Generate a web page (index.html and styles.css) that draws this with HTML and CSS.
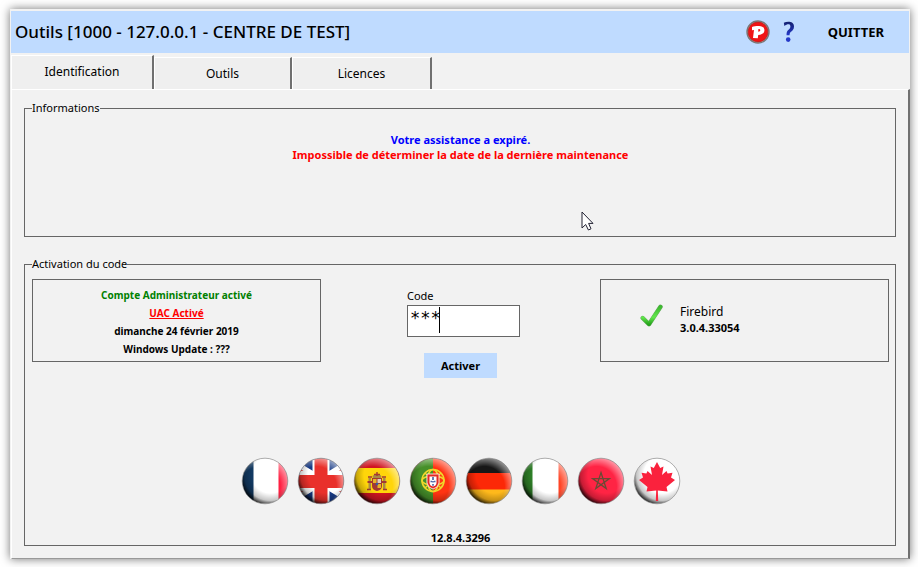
FILE: index.html
```html
<!DOCTYPE html>
<html lang="fr">
<head>
<meta charset="utf-8">
<title>Outils</title>
<link rel="stylesheet" href="styles.css">
</head>
<body>
<svg width="0" height="0" class="defs" aria-hidden="true">
  <defs>
    <clipPath id="disc"><circle cx="24" cy="24" r="22.6"/></clipPath>
    <radialGradient id="shade" cx="0.62" cy="0.36" r="0.68">
      <stop offset="0.6" stop-color="#000" stop-opacity="0"/>
      <stop offset="0.84" stop-color="#000" stop-opacity="0.22"/>
      <stop offset="1" stop-color="#000" stop-opacity="0.85"/>
    </radialGradient>
    <radialGradient id="gloss" cx="0.4" cy="0.62" r="0.68">
      <stop offset="0.65" stop-color="#fff" stop-opacity="0"/>
      <stop offset="1" stop-color="#fff" stop-opacity="0.6"/>
    </radialGradient>
    <g id="finish">
      <circle cx="24" cy="24" r="22.6" fill="url(#gloss)"/>
      <circle cx="24" cy="24" r="22.6" fill="url(#shade)"/>
      <circle cx="24" cy="24" r="22.8" fill="none" stroke="#777" stroke-opacity="0.65" stroke-width="0.9"/>
    </g>
    <linearGradient id="green" x1="0" y1="0" x2="0" y2="1">
      <stop offset="0" stop-color="#3cb82f"/><stop offset="0.6" stop-color="#62e84c"/><stop offset="1" stop-color="#27a31d"/>
    </linearGradient>
    <linearGradient id="blue" x1="0" y1="0" x2="0" y2="1">
      <stop offset="0" stop-color="#14206e"/><stop offset="1" stop-color="#2438c8"/>
    </linearGradient>
  </defs>
</svg>
<main class="window">
  <header class="titlebar">
    <h1>Outils [1000 - 127.0.0.1 - CENTRE DE TEST]</h1>
    <button class="tool" type="button" aria-label="P">
      <svg width="24" height="24" viewBox="0 0 24 24">
        <circle cx="12" cy="12" r="11" fill="#d8c8c6" stroke="#777" stroke-width="1.4"/>
        <circle cx="12" cy="12" r="9.9" fill="#f01414" stroke="#b51a1a" stroke-width="0.8"/>
        <path fill="#fff" fill-rule="evenodd" d="M6 7 C8 6 11 5.800 13 5.900 C16.800 6 18.600 7.800 18.400 10.400 C18.200 13.400 15.800 14.900 12.200 14.900 L11.800 18.200 L7 18 L8 10 L6 10.300 Z M12.400 9 L12.200 11.700 C13.600 11.700 14.300 11.200 14.300 10.300 C14.300 9.400 13.600 9 12.400 9 Z"/>
      </svg>
    </button>
    <button class="tool help" type="button" aria-label="Aide">
      <svg width="14" height="22" viewBox="0 0 14 22">
        <path fill="url(#blue)" d="M1.8 1.8 C5.8 -0.3 12 0.4 12 5.4 C12 8.3 10.4 9.6 9 10.8 C7.7 12 7.6 12.8 7.6 14.2 H4.6 C4.4 11.7 5 10.4 6.3 9.1 C7.5 7.8 8.4 7 8.4 5.4 C8.4 2.6 5.2 2.8 2.4 5 Z"/>
        <circle cx="6.2" cy="18.6" r="2.3" fill="#2438c8"/>
      </svg>
    </button>
    <button class="quit" type="button">QUITTER</button>
  </header>
  <nav class="tabs" role="tablist">
    <button class="tab active" type="button" role="tab" aria-selected="true">Identification</button>
    <button class="tab" type="button" role="tab" aria-selected="false">Outils</button>
    <button class="tab" type="button" role="tab" aria-selected="false">Licences</button>
  </nav>
  <section class="panel">
    <fieldset class="infos">
      <legend>Informations</legend>
      <p class="notice">Votre assistance a expiré.</p>
      <p class="alert">Impossible de déterminer la date de la dernière maintenance</p>
      <svg class="pointer" width="14" height="21" viewBox="0 0 14 21"><path d="M1 1 V17 L4.7 13.5 L7.4 19 L10 17.8 L7.6 12.4 H12 Z" fill="#fff" stroke="#223" stroke-width="1"/></svg>
    </fieldset>
    <fieldset class="activation">
      <legend>Activation du code</legend>
      <div class="columns">
        <div class="card status">
          <p class="ok">Compte Administrateur activé</p>
          <p><a class="uac" href="#">UAC Activé</a></p>
          <p>dimanche 24 février 2019</p>
          <p>Windows Update : ???</p>
        </div>
        <form class="code">
          <div class="entry">
            <label for="code">Code</label>
            <div class="field"><input id="code" type="text" value="***"><span class="caret"></span></div>
          </div>
          <button type="button">Activer</button>
        </form>
        <div class="card database">
          <svg width="24" height="24" viewBox="0 0 24 24"><path d="M2.7 14 L9 20.2 L20.5 2.8" fill="none" stroke="#6aa864" stroke-width="4.400" stroke-linecap="round" stroke-linejoin="round"/><path d="M2.7 14 L9 20.2 L20.5 2.8" fill="none" stroke="url(#green)" stroke-width="3.6" stroke-linecap="round" stroke-linejoin="round"/></svg>
          <div><p class="name">Firebird</p><p>3.0.4.33054</p></div>
        </div>
      </div>
      <div class="flags">
        <button type="button" aria-label="Français"><svg viewBox="0 0 48 48"><g clip-path="url(#disc)"><path fill="#fff" d="M0 0H48V48H0Z"/><path fill="#123a63" d="M0 0H12.500V48H0Z"/><path fill="#ff2142" d="M37.500 0H48V48H37.500Z"/></g><use href="#finish"/></svg></button>
        <button type="button" aria-label="English"><svg viewBox="0 0 48 48"><g clip-path="url(#disc)"><path fill="#173a85" d="M0 0H48V48H0Z"/><path stroke="#fff" stroke-width="9" d="M-6 6L54 42M54 6L-6 42"/><path stroke="#e5281f" stroke-width="2.600" d="M-6 8L24 26M54 8L24 26M24 22L-6 40M24 22L54 40"/><path fill="#fff" d="M15.500 0H32.500V48H15.500ZM0 14H48V34H0Z"/><path fill="#e9302b" d="M17.500 0H30.500V48H17.500ZM0 18H48V31H0Z"/></g><use href="#finish"/></svg></button>
        <button type="button" aria-label="Español"><svg viewBox="0 0 48 48"><g clip-path="url(#disc)"><path fill="#d01522" d="M0 0H48V48H0Z"/><path fill="#ffd50a" d="M0 11H48V36H0Z"/><path fill="#a98b45" d="M15.500 21H18V32H15.500ZM30 21H32.500V32H30ZM19.500 19Q24 14 28.500 19L28 21H20Z"/><path fill="#a33a32" d="M19 21H29V29Q29 33 24 34Q19 33 19 29ZM14.500 24H19V26H14.500ZM29 24H33.500V26H29Z"/><path fill="#e5b62a" d="M20 22H23.500V26H20ZM24.500 27H28V31H24.500Z"/><path fill="#ddd0be" d="M24.500 22H28V26H24.500Z"/><circle cx="24" cy="27" r="1.300" fill="#355ba1"/><path stroke="#a33a32" stroke-width="1.400" d="M21 17.500H27M24 15V19M15 20H19M29 20H33M14 32.500H18M30 32.500H34"/></g><use href="#finish"/></svg></button>
        <button type="button" aria-label="Português"><svg viewBox="0 0 48 48"><g clip-path="url(#disc)"><path fill="#ff3412" d="M0 0H48V48H0Z"/><path fill="#46902a" d="M0 0H24V48H0Z"/><g fill="none" stroke="#efd72b" stroke-width="1.600"><circle cx="24" cy="23.500" r="11"/><ellipse cx="24" cy="23.500" rx="11" ry="4.500"/><ellipse cx="24" cy="23.500" rx="5.500" ry="11"/><path d="M16 16L32 31M32 16L16 31"/></g><path fill="#e32a25" stroke="#fff" stroke-width=".8" d="M18 17H30V26Q29 31 24 32Q19 31 18 26Z"/><path fill="#fff" d="M20.500 19.500H27.500V26Q27 29 24 29.500Q21 29 20.500 26Z"/><path stroke="#4d64a8" stroke-width="1.700" d="M24 20V23M24 24V25.500M24 27V28.800M21.500 24.500H23M25 24.500H26.500"/></g><use href="#finish"/></svg></button>
        <button type="button" aria-label="Deutsch"><svg viewBox="0 0 48 48"><g clip-path="url(#disc)"><path fill="#171717" d="M0 0H48V17H0Z"/><path fill="#fc2807" d="M0 16H48V33H0Z"/><path fill="#ffb91b" d="M0 32.500H48V48H0Z"/></g><use href="#finish"/></svg></button>
        <button type="button" aria-label="Italiano"><svg viewBox="0 0 48 48"><g clip-path="url(#disc)"><path fill="#fff" d="M0 0H48V48H0Z"/><path fill="#2f8128" d="M0 0H11.500V48H0Z"/><path fill="#ff4526" d="M37.500 0H48V48H37.500Z"/></g><use href="#finish"/></svg></button>
        <button type="button" aria-label="Maroc"><svg viewBox="0 0 48 48"><g clip-path="url(#disc)"><path fill="#ff2444" d="M0 0H48V48H0Z"/><path fill="none" stroke="#6b4a35" stroke-width="1.300" d="M24 15.500L29.200 31.500L15.600 21.600H32.400L18.800 31.500Z"/></g><use href="#finish"/></svg></button>
        <button type="button" aria-label="Canada"><svg viewBox="0 0 48 48"><g clip-path="url(#disc)"><path fill="#fff" d="M0 0H48V48H0Z"/></g><use href="#finish"/><path fill="#fa223d" d="M24 5L27.200 11L30.500 9.500L29 18L33.500 14L34.600 16.600L39.500 15.800L38 20.600L42 23L33.500 30L34.500 34.500L24.800 33.500L25.200 44H22.800L23.200 33.500L13.500 34.500L14.500 30L6 23L10 20.600L8.500 15.800L13.400 16.600L14.500 14L19 18L17.500 9.500L20.800 11Z"/></svg></button>
      </div>
      <p class="version">12.8.4.3296</p>
    </fieldset>
  </section>
</main>
</body>
</html>
```
FILE: styles.css
```css
* { box-sizing: border-box; }
body {
  margin: 0;
  min-height: 100vh;
  padding: 9px 8px 8px 10px;
  display: flex;
  background: #fff;
  color: #000;
  font: 11px/16px "Noto Sans", sans-serif;
}
p, h1 { margin: 0; }
button { border: 0; padding: 0; background: none; color: inherit; font: inherit; }
.defs { position: absolute; }
.window {
  flex: 1;
  min-width: 0;
  display: flex;
  flex-direction: column;
  padding-top: 2px;
  border-left: 1px solid #f2f2f2;
  background: #f2f2f2;
  box-shadow: 0 0 9px rgba(0, 0, 0, 0.55);
}
.titlebar {
  height: 42px;
  margin-right: 1px;
  padding: 0 25px 0 4px;
  display: flex;
  align-items: center;
  background: #bfdbff;
}
.titlebar h1 { flex: 1; font-size: 17px; line-height: 24px; font-weight: 500; }
.tool { display: flex; margin-right: 12px; }
.help { margin-right: 32px; }
.quit { font-size: 13px; font-weight: 700; }
.tabs { display: flex; align-items: flex-end; margin-top: 2px; }
.tab {
  width: 138px;
  height: 32px;
  background: #efefef;
  border: 1px solid #fff;
  border-width: 1px 2px 0 1px;
  border-right-color: #707070;
  font-size: 12px;
}
.tab:last-child { width: 140px; }
.tab.active { width: 143px; height: 34px; padding-bottom: 2px; }
.panel {
  flex: 1;
  display: flex;
  flex-direction: column;
  gap: 19px;
  padding: 10px 12px 12px;
  border: 1px solid #fff;
  border-width: 1px 2px 1px 1px;
  border-right-color: #707070;
  border-bottom-color: #999;
}
fieldset { margin: 0; min-width: 0; border: 1px solid #666; padding: 0 6px 0 7px; }
legend { padding: 0; }
.infos { position: relative; height: 137px; padding-top: 16px; text-align: center; font-weight: 700; line-height: 15px; }
.infos legend, .activation legend { text-align: left; font-weight: 400; line-height: 16px; }
.notice { color: #00f; }
.alert { color: #f00; }
.pointer { position: absolute; left: 556px; top: 95px; }
.activation { flex: 1; display: flex; flex-direction: column; }
.columns { display: flex; align-items: flex-start; margin-top: 7px; }
.card { width: 289px; height: 83px; border: 1px solid #666; font-weight: 700; }
.status { padding-top: 6px; text-align: center; font-size: 10px; line-height: 18px; }
.ok { color: #008000; }
.uac { color: #f00; }
.code { flex: 1; display: flex; flex-direction: column; align-items: center; gap: 16px; padding-top: 9px; }
.entry { display: flex; flex-direction: column; gap: 1px; width: 119px; padding-left: 6px; }
.field { position: relative; display: flex; }
.field input {
  width: 100%;
  height: 32px;
  padding: 0 2px 6px;
  border: 1px solid #666;
  background: #fff;
  font: 17px/24px "DejaVu Sans Mono", monospace;
  outline: 0;
}
.caret { position: absolute; left: 32px; top: 2px; width: 1px; height: 26px; background: #000; }
.code button { width: 73px; height: 25px; background: #bfdbff; font-weight: 700; }
.database { display: flex; gap: 16px; align-items: flex-start; padding: 24px 0 0 39px; }
.name { font-size: 12px; font-weight: 400; }
.flags { display: flex; justify-content: center; gap: 8px; margin-top: 79px; }
.flags button { width: 48px; height: 48px; }
.flags svg { display: block; }
.version { margin-top: auto; text-align: center; font-weight: 700; line-height: 14px; }
```
